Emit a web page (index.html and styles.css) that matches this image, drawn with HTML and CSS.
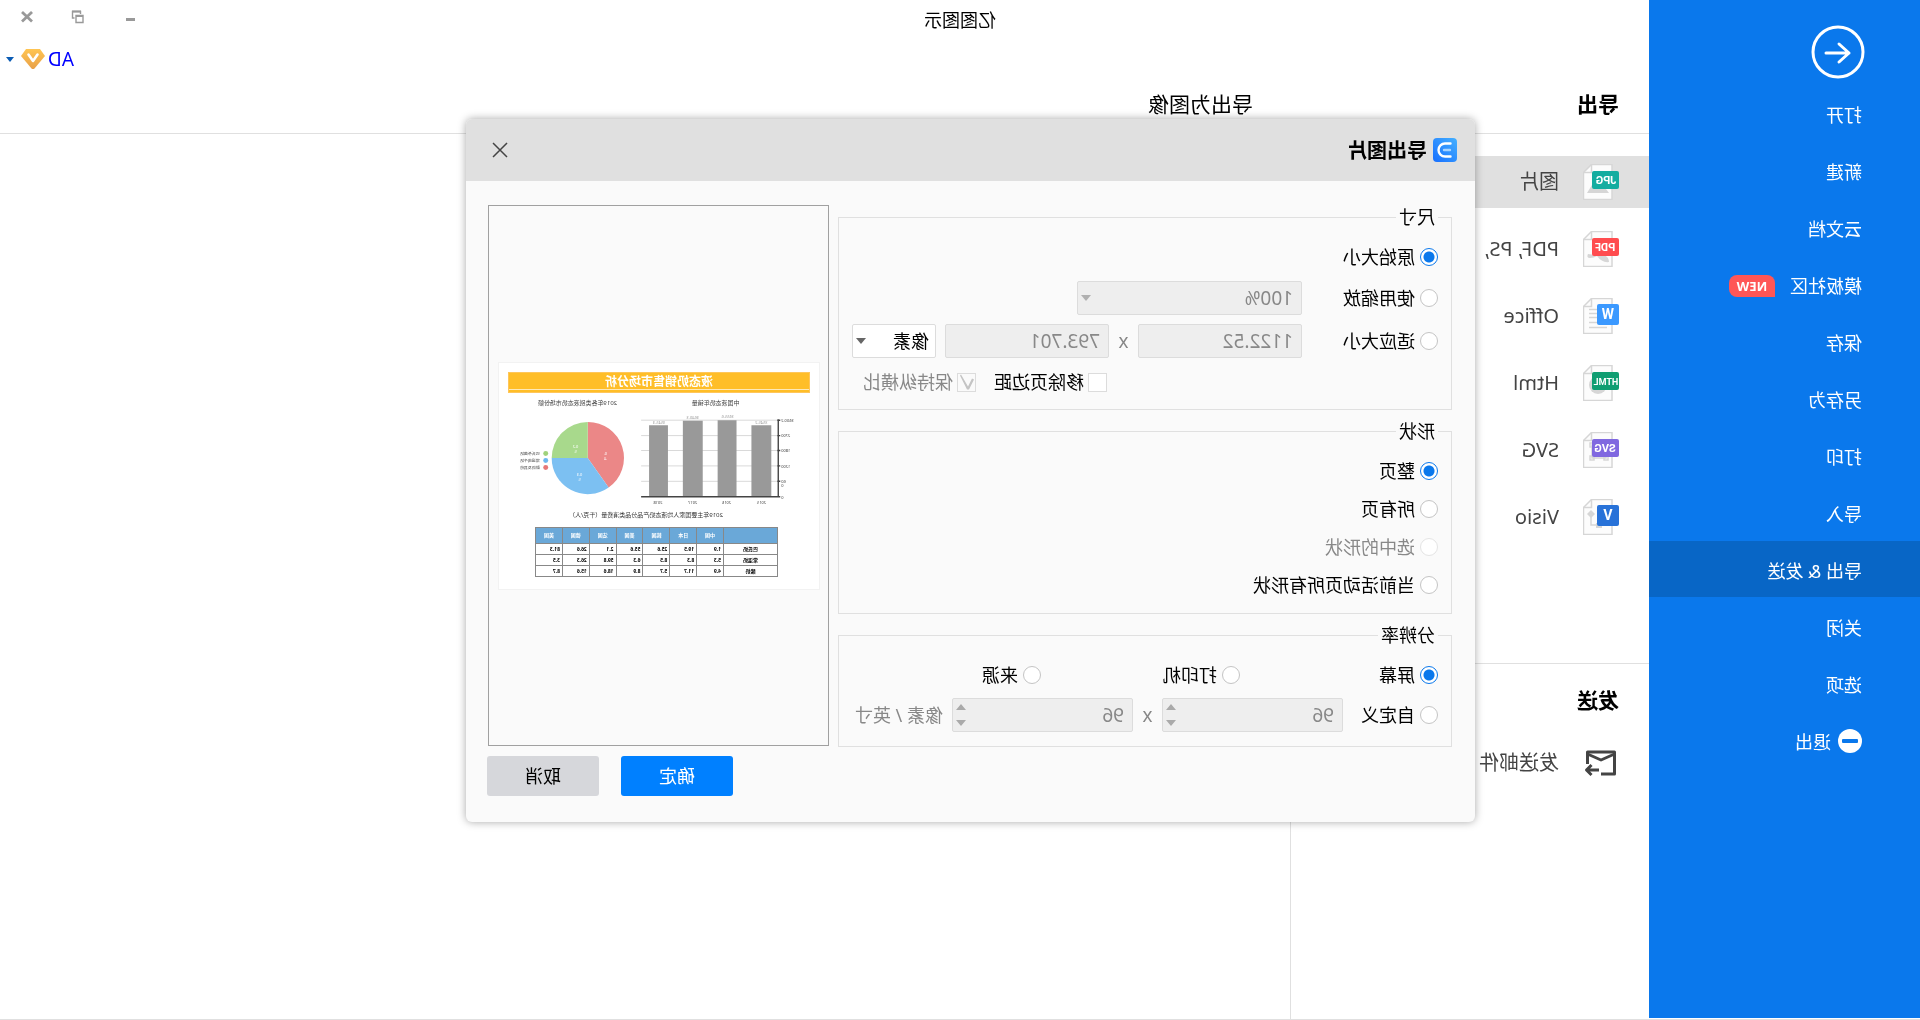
FILE: index.html
```html
<!DOCTYPE html>
<html lang="zh-CN">
<head>
<meta charset="utf-8">
<title>亿图图示</title>
<link rel="stylesheet" href="styles.css">
</head>
<body>
<div class="app">
  <nav class="sidebar">
    <button class="back" type="button" aria-label="返回">
      <svg width="54" height="54" viewBox="0 0 54 54" fill="none" stroke="#fff" stroke-width="3" stroke-linecap="round" stroke-linejoin="round"><circle cx="27" cy="27" r="25"/><path d="M39 28H16M26 19l-10 9 10 9"/></svg>
    </button>
    <a class="nav-item" href="#">打开</a>
    <a class="nav-item" href="#">新建</a>
    <a class="nav-item" href="#">云文档</a>
    <a class="nav-item" href="#">模板社区<span class="badge">NEW</span></a>
    <a class="nav-item" href="#">保存</a>
    <a class="nav-item" href="#">另存为</a>
    <a class="nav-item" href="#">打印</a>
    <a class="nav-item" href="#">导入</a>
    <a class="nav-item nav-item-active" href="#">导出 &amp; 发送</a>
    <a class="nav-item" href="#">关闭</a>
    <a class="nav-item" href="#">选项</a>
    <a class="nav-item nav-item-exit" href="#"><svg width="24" height="24" viewBox="0 0 24 24"><circle cx="12" cy="12" r="12" fill="#fff"/><rect x="4" y="10" width="16" height="4" rx="1" fill="#0a78ec"/></svg>退出</a>
  </nav>

  <main class="workspace">
    <header class="titlebar">
      <div class="app-title">亿图图示</div>
      <div class="window-controls">
        <button type="button" aria-label="最小化"><svg width="14" height="14" viewBox="0 0 14 14"><path d="M1 9.500h9" stroke="#999" stroke-width="3"/></svg></button>
        <button type="button" aria-label="还原"><svg width="14" height="14" viewBox="0 0 14 14" fill="none" stroke="#999"><path d="M2 5.500h7v7H2z" stroke-width="1.400"/><path d="M2 6h7" stroke-width="2"/><path d="M4.500 4V1.500h8v6.500h-2" stroke-width="1.400"/><path d="M4 1.500h9" stroke-width="2"/></svg></button>
        <button type="button" aria-label="关闭窗口"><svg width="14" height="14" viewBox="0 0 14 14"><path d="M2 2l10 9.500M12 2L2 11.500" stroke="#999" stroke-width="2.800"/></svg></button>
      </div>
    </header>
    <div class="account">
      <a href="#">AD</a>
      <svg width="24" height="22" viewBox="0 0 24 22"><defs><linearGradient id="gem" x1="0" y1="0" x2="0" y2="1"><stop offset="0" stop-color="#ffc552"/><stop offset="1" stop-color="#e8a048"/></linearGradient></defs><path d="M5 1h14l5 7-10.500 12.500q-1.500 1-3 0L0 8z" fill="url(#gem)"/><path d="M7.500 6.500L12 13l4.500-6.500" fill="none" stroke="#fff" stroke-width="2.600" stroke-linecap="round" stroke-linejoin="round"/></svg>
      <svg width="8" height="5" viewBox="0 0 8 5"><path d="M0 0h8L4 5z" fill="#0b5cb4"/></svg>
    </div>
    <div class="headings">
      <h2 class="heading-strong">导出</h2>
      <h2 class="heading-plain">导出为图像</h2>
    </div>
    <div class="panes">
      <div class="list-pane">
        <section class="export-list">
          <a class="row row-active" href="#">
            <svg class="doc" viewBox="0 0 36 36"><path class="sheet-line" d="M7 .5h20.500l8 8v27H7z"/><path class="sheet-line" d="M27.500.5v8h8"/><path d="M10 29l6-8 4 4 4-9 8 13z" fill="#d6d6d6"/><rect y="7" width="27" height="18" rx="2" fill="#14ada0"/><text x="13" y="20">JPG</text></svg>图片</a>
          <a class="row" href="#">
            <svg class="doc" viewBox="0 0 36 36"><path class="sheet-line" d="M7 .5h20.500l8 8v27H7z"/><path class="sheet-line" d="M27.500.5v8h8"/><path d="M10 31q0-5 5-7h9l7-1q2 4-2 4t-7-2q-5 7-12 6z" fill="#d6d6d6"/><rect y="7" width="27" height="18" rx="2" fill="#ff4c4f"/><text x="14" y="20">PDF</text></svg>PDF, PS,</a>
          <a class="row" href="#">
            <svg class="doc" viewBox="0 0 36 36"><path class="sheet-line" d="M7 .5h20.500l8 8v27H7z"/><path class="sheet-line" d="M27.500.5v8h8M20 11.500h10M20 15.500h10M20 19.500h10M20 24.500h10M12 29.500h18"/><rect y="6" width="22" height="21" rx="2" fill="#3b99ff"/><text class="big" x="11" y="21">W</text></svg>Office</a>
          <a class="row" href="#">
            <svg class="doc" viewBox="0 0 36 36"><path class="sheet-line" d="M7 .5h20.500l8 8v27H7z"/><path class="sheet-line" d="M27.500.5v8h8"/><circle cx="21" cy="20" r="9" fill="#d6d6d6"/><rect y="7" width="27" height="18" rx="2" fill="#109e72"/><text class="small" x="13" y="20">HTML</text></svg>Html</a>
          <a class="row" href="#">
            <svg class="doc" viewBox="0 0 36 36"><path class="sheet-line" d="M7 .5h20.500l8 8v27H7z"/><path class="sheet-line" d="M27.500.5v8h8"/><path d="M13 13h14v13H13zM11 24h4v4h-4zM25 24h4v4h-4zM25 11h4v4h-4z" fill="#fff" stroke="#d6d6d6" stroke-width="1.500"/><rect y="7" width="27" height="18" rx="2" fill="#8068e0"/><text x="14" y="20">SVG</text></svg>SVG</a>
          <a class="row" href="#">
            <svg class="doc" viewBox="0 0 36 36"><path class="sheet-line" d="M7 .5h20.500l8 8v27H7z"/><path class="sheet-line" d="M27.500.5v8h8M28 15v11h-9"/><path d="M28 11l4 4-4 4-4-4zM17 24h6v5h-6z" fill="#d6d6d6"/><rect y="6" width="22" height="21" rx="2" fill="#2872d8"/><text class="big" x="11" y="21">V</text></svg>Visio</a>
        </section>
        <section class="send-list">
          <h2 class="heading-strong">发送</h2>
          <a class="row" href="#">
            <svg class="doc" viewBox="0 0 36 36" fill="none" stroke="#444" stroke-width="3" stroke-linejoin="round"><path d="M18 29H4.500V7h27v12"/><path d="M4.500 9L18 15l13.500-6"/><path d="M20 25h11M27.500 20l5 5-5 5"/></svg>发送邮件</a>
        </section>
      </div>
      <div class="detail-pane"></div>
    </div>
  </main>

  <form class="dialog" role="dialog" aria-labelledby="dlg-title">
    <header class="dialog-head">
      <svg width="24" height="24" viewBox="0 0 24 24" fill="none" stroke-linecap="round"><defs><linearGradient id="logo" x1="0" y1="0" x2="1" y2="1"><stop offset="0" stop-color="#45b0ff"/><stop offset="1" stop-color="#176fff"/></linearGradient></defs><rect width="24" height="24" rx="4" fill="url(#logo)"/><path d="M6.500 5.500H12a6.500 6.500 0 0 1 0 13H6.500" stroke="#fff" stroke-width="2.400"/><path d="M7 12h6" stroke="#a8d4ff" stroke-width="2.400"/></svg>
      <h1 id="dlg-title">导出图片</h1>
      <button type="button" class="close" aria-label="关闭"><svg width="16" height="16" viewBox="0 0 16 16"><path d="M1 1l14 14M15 1L1 15" stroke="#444" stroke-width="1.500"/></svg></button>
    </header>
    <div class="dialog-body">
      <div class="options">
        <fieldset>
          <legend>尺寸</legend>
          <div class="size-grid">
            <label class="choice full"><input type="radio" name="size" checked>原始大小</label>
            <label class="choice"><input type="radio" name="size">使用缩放</label>
            <span class="select zoom"><select disabled aria-label="缩放"><option>100%</option></select></span>
            <label class="choice"><input type="radio" name="size">适应大小</label>
            <div class="pair">
              <input class="field" type="text" value="1122.52" disabled aria-label="宽度">
              <span class="times">x</span>
              <input class="field" type="text" value="793.701" disabled aria-label="高度">
              <span class="select unit"><select aria-label="单位"><option>像素</option></select></span>
            </div>
            <div class="checks">
              <label class="choice"><input type="checkbox">移除页边距</label>
              <label class="choice off"><input type="checkbox" checked disabled>保持纵横比</label>
            </div>
          </div>
        </fieldset>
        <fieldset>
          <legend>形状</legend>
          <div class="shape-list">
            <label class="choice"><input type="radio" name="shape" checked>整页</label>
            <label class="choice"><input type="radio" name="shape">所有页</label>
            <label class="choice off"><input type="radio" name="shape" disabled>选中的形状</label>
            <label class="choice"><input type="radio" name="shape">当前活动页所有形状</label>
          </div>
        </fieldset>
        <fieldset>
          <legend>分辨率</legend>
          <div class="res-list">
            <div class="res-presets">
              <label class="choice"><input type="radio" name="dpi" checked>屏幕</label>
              <label class="choice"><input type="radio" name="dpi">打印机</label>
              <label class="choice"><input type="radio" name="dpi">来源</label>
            </div>
            <div class="res-custom">
              <label class="choice"><input type="radio" name="dpi">自定义</label>
              <span class="spin"><input type="number" value="96" disabled aria-label="水平分辨率"></span>
              <span class="times">x</span>
              <span class="spin"><input type="number" value="96" disabled aria-label="垂直分辨率"></span>
              <span class="unit-note">像素 / 英寸</span>
            </div>
          </div>
        </fieldset>
      </div>

      <div class="preview">
        <div class="sheet">
          <div class="banner">液态奶销售市场分析</div>
          <svg class="charts" viewBox="0 34 322 112">
            <g class="cap"><text x="104" y="43">中国液态奶年销量</text><text x="243" y="43">2019年各类别液态奶市场份额</text></g>
            <path d="M41 58h138M41 73.500h138M41 88.500h138M41 104h138M41 119.500h138" stroke="#d9d9d9"/>
            <path d="M48 63h20v72H48zM83 58h19v77H83zM117 58.500h20V135h-20zM152 63h19v72h-19z" fill="#999"/>
            <path d="M41 57v78.500M39 58h3M39 73.500h3M39 88.500h3M39 104h3M39 119.500h3M39 135h140" stroke="#444" stroke-width="1.400" fill="none"/>
            <g class="val"><text x="58" y="62">3545.2</text><text x="92" y="56">3655.6</text><text x="127" y="57">3640.3</text><text x="161" y="62">3545.3</text></g>
            <g class="axis"><text x="58" y="142">2015</text><text x="93" y="142">2016</text><text x="127" y="142">2017</text><text x="162" y="142">2018</text></g>
            <g class="tick"><text x="38" y="60">3600.2</text><text x="38" y="75">2700</text><text x="38" y="90">1800</text><text x="38" y="106">1200</text><text x="38" y="121">60</text><text x="38" y="125">0</text><text x="38" y="137">0</text></g>
            <path d="M232.700 96V59.700a36.300 36.300 0 0 0-21 66z" fill="#eb8787"/>
            <path d="M232.700 96l-21 29.700A36.300 36.300 0 0 0 269 96z" fill="#7cc0f2"/>
            <path d="M232.700 96V59.700A36.300 36.300 0 0 1 269 96z" fill="#a8d98c"/>
            <g class="slice"><text x="215" y="93">0.</text><text x="215" y="98">4</text><text x="245" y="86">0.2</text><text x="245" y="91">5</text><text x="241" y="114">0.3</text><text x="241" y="119">5</text></g>
            <circle cx="275" cy="91.500" r="2.500" fill="#a0d27c"/><circle cx="275" cy="98.500" r="2.500" fill="#6db8f0"/><circle cx="275" cy="105.500" r="2.500" fill="#e67878"/>
            <g class="key"><text x="281" y="93">巴氏杀菌奶</text><text x="281" y="100">常温纯牛奶</text><text x="281" y="107">酸奶及其他</text></g>
          </svg>
          <div class="caption">2019年主要国家人均液态奶产品分品类消费量（千克/人）</div>
          <table>
            <thead><tr><th></th><th>中国</th><th>日本</th><th>韩国</th><th>美国</th><th>法国</th><th>德国</th><th>英国</th></tr></thead>
            <tbody>
              <tr><th>巴氏奶</th><td>1.9</td><td>19.5</td><td>25.6</td><td>55.6</td><td>2.1</td><td>26.6</td><td>81.3</td></tr>
              <tr><th>常温奶</th><td>5.3</td><td>8.3</td><td>8.5</td><td>6.3</td><td>59.8</td><td>26.3</td><td>3.5</td></tr>
              <tr><th>酸奶</th><td>4.9</td><td>11.7</td><td>5.7</td><td>8.9</td><td>18.6</td><td>15.6</td><td>8.7</td></tr>
            </tbody>
          </table>
        </div>
      </div>
    </div>
    <footer class="dialog-foot">
      <button type="submit" class="btn btn-primary">确定</button>
      <button type="button" class="btn">取消</button>
    </footer>
  </form>
</div>
</body>
</html>
```
FILE: styles.css
```css
* { box-sizing: border-box; }

body {
  margin: 0;
  background: #fff;
  color: #000;
  font-family: "Noto Sans", "Noto Sans CJK SC", sans-serif;
  font-size: 18px;
  line-height: 24px;
}

button, input, select { font: inherit; color: inherit; }
button { border: 0; padding: 0; background: none; display: flex; align-items: center; justify-content: center; }
a { color: inherit; text-decoration: none; }
h1, h2 { margin: 0; font-weight: 700; }
svg { display: block; flex: none; }

/* The whole window is shown flipped left to right */
.app {
  position: relative;
  display: flex;
  min-height: 100vh;
  border-bottom: 1px solid #e0e0e0;
  transform: scaleX(-1);
}

/* Sidebar */
.sidebar {
  flex: 0 0 271px;
  display: flex;
  flex-direction: column;
  gap: 1px;
  background: #0a78ec;
  color: #fff;
  padding-top: 25px;
  border-bottom: 1px solid #fff;
}
.back { width: 54px; height: 54px; margin: 0 0 5px 55px; }
.nav-item {
  display: flex;
  align-items: center;
  height: 56px;
  padding: 3px 0 0 58px;
}
.nav-item-active { background: #0866c6; }
.nav-item-exit { gap: 7px; }
.nav-item-exit svg { margin-bottom: 1px; }
.badge {
  width: 46px;
  height: 22px;
  margin-left: 15px;
  border-radius: 8px 8px 8px 0;
  background: #ff5656;
  font-size: 13px;
  font-weight: 700;
  line-height: 22px;
  text-align: center;
}

/* Workspace */
.workspace { flex: 1; min-width: 0; display: flex; flex-direction: column; }
.titlebar { display: grid; grid-template-columns: 1fr 271px; height: 40px; }
.app-title { text-align: center; line-height: 40px; }
.window-controls {
  display: flex;
  justify-content: flex-end;
  gap: 37px;
  padding: 10px 20px 0 0;
}
.window-controls button { height: 14px; }
.account {
  display: flex;
  align-items: center;
  justify-content: flex-end;
  gap: 3px;
  height: 38px;
  padding-right: 6px;
  font-size: 19px;
  color: #00f;
}
.account svg:last-child { margin-left: 4px; }
.headings {
  display: grid;
  grid-template-columns: 358px 1fr;
  height: 56px;
  border-bottom: 1px solid #e0e0e0;
  line-height: 52px;
}
.headings h2, .send-list h2 { font-size: 21px; }
.heading-strong { padding-left: 30px; }
.heading-plain { padding-left: 38px; font-weight: 400; }
.panes { flex: 1; display: grid; grid-template-columns: 358px 1fr; }
.detail-pane { border-left: 1px solid #e0e0e0; }
.export-list {
  display: flex;
  flex-direction: column;
  gap: 15px;
  padding: 22px 0 120px;
}
.send-list { border-top: 1px solid #e0e0e0; padding-top: 21px; }
.send-list h2 { line-height: 30px; margin-bottom: 22px; }
.row {
  display: flex;
  align-items: center;
  gap: 24px;
  height: 52px;
  padding-left: 30px;
  font-size: 20px;
  line-height: 26px;
  color: #444;
  white-space: nowrap;
}
.row-active { background: #e0e0e0; }
.doc { width: 36px; height: 36px; }
.doc text {
  fill: #fff;
  font-family: Roboto, sans-serif;
  font-size: 11px;
  font-weight: 700;
  text-anchor: middle;
}
.doc .big { font-size: 14px; }
.doc .small { font-size: 9px; }
.sheet-line { fill: none; stroke: #d6d6d6; stroke-width: 1.5px; }
.row .sheet-line:first-child { fill: #fcfcfc; }

/* Export dialog */
.dialog {
  position: absolute;
  left: 445px;
  top: 119px;
  width: 1009px;
  background: #fafafa;
  border-radius: 6px;
  box-shadow: 0 0 8px rgba(0, 0, 0, .35);
}
.dialog-head {
  display: flex;
  align-items: center;
  gap: 6px;
  height: 62px;
  padding: 0 26px 0 18px;
  background: #e0e0e0;
  border-radius: 6px 6px 0 0;
}
.dialog-head h1 { font-size: 20px; padding-top: 2px; }
.close { margin-left: auto; }
.dialog-body { display: flex; gap: 9px; padding: 24px 22px 0 23px; }
.options { flex: 1; display: flex; flex-direction: column; gap: 9px; }

fieldset {
  min-width: 0;
  margin: 0;
  padding: 16px 13px 14px;
  border: 1px solid #e0e0e0;
}
legend { padding: 0 3px; line-height: 24px; }
.choice { display: flex; align-items: center; gap: 5px; height: 24px; white-space: nowrap; }
.off, .unit-note { color: #888; }

input[type="radio"], input[type="checkbox"] {
  appearance: none;
  flex: none;
  width: 18px;
  height: 18px;
  margin: 0;
  border: 1px solid #c4c4c4;
  background: #fff;
}
input[type="radio"] { border-radius: 50%; }
input[type="radio"]:checked {
  border-color: #0a78ec;
  background: radial-gradient(circle, #0a78ec 5px, #fff 6px);
}
input[type="radio"]:disabled { border-color: #e4e4e4; }
input[type="checkbox"] { width: 19px; height: 19px; border-color: #dcdcdc; }
input[type="checkbox"]:checked { display: grid; background: #fafafa; }
input[type="checkbox"]:checked::before {
  content: "";
  background: #c4c4c4;
  clip-path: polygon(1px 6px, 3px 5px, 7px 13px, 14px 1px, 15px 2px, 8px 16px, 6px 16px);
}

.size-grid {
  display: grid;
  grid-template-columns: 136px 1fr;
  align-items: center;
  row-gap: 9px;
}
.full { grid-column: 1 / 3; margin-bottom: 3px; }
.pair { display: flex; align-items: center; }
.field, .select select, .spin input {
  width: 100%;
  height: 34px;
  margin: 0;
  padding: 0 8px;
  border: 1px solid #dcdcdc;
  border-radius: 2px;
  background: #fff;
  appearance: none;
}
.field:disabled, .select select:disabled, .spin input:disabled {
  background: #eee;
  color: #888;
  font-size: 19px;
  opacity: 1;
}
.pair .field { width: 164px; }
.times { width: 29px; text-align: center; font-size: 19px; color: #888; }
.select { display: grid; align-items: center; }
.select::after {
  content: "";
  grid-area: 1 / 1;
  justify-self: end;
  width: 10px;
  height: 6px;
  margin-right: 4px;
  background: #666;
  clip-path: polygon(0 0, 100% 0, 50% 100%);
  pointer-events: none;
}
.select select { grid-area: 1 / 1; }
.zoom { width: 225px; }
.zoom::after { background: #b0b0b0; }
.unit { width: 84px; margin-left: 9px; }
.unit select { padding: 0 6px; }
.checks { grid-column: 2; display: flex; gap: 18px; margin: 3px 0 1px 195px; }
.checks .choice { gap: 4px; }

.shape-list { display: flex; flex-direction: column; gap: 14px; padding-bottom: 2px; }

.res-list { display: flex; flex-direction: column; gap: 11px; }
.res-presets { display: grid; grid-template-columns: 198px 199px 1fr; }
.res-custom { display: flex; align-items: center; }
.res-custom .choice { width: 95px; }
.spin { display: grid; align-items: center; width: 181px; }
.spin input { grid-area: 1 / 1; appearance: textfield; }
.spin input::-webkit-inner-spin-button { appearance: none; }
.spin::after {
  content: "";
  grid-area: 1 / 1;
  justify-self: end;
  width: 10px;
  height: 22px;
  margin-right: 4px;
  background: #aaa;
  clip-path: polygon(0 6px, 50% 0, 100% 6px, 0 6px, 0 16px, 100% 16px, 50% 22px, 0 16px);
}
.unit-note { margin-left: 9px; white-space: nowrap; }

.dialog-foot { display: flex; justify-content: flex-end; gap: 22px; padding: 9px 21px 26px; }
.btn { width: 112px; height: 40px; border-radius: 3px; background: #d6d7db; }
.btn-primary { background: #0080ff; color: #fff; }

/* Preview thumbnail */
.preview {
  flex: 0 0 341px;
  height: 541px;
  display: flex;
  align-items: center;
  padding-left: 8px;
  border: 1px solid #a0a0a0;
}
.sheet {
  width: 322px;
  height: 228px;
  padding-top: 9px;
  background: #fff;
  border: 1px solid #f2f2f2;
  font-size: 6px;
  line-height: 8px;
  color: #333;
}
.banner {
  height: 21px;
  margin: 0 9px;
  border: 1px solid #ffc65a;
  background: linear-gradient(#ffbe28 16px, #ffe9b8 16px, #ffe9b8 17px, #ffbe28 17px);
  color: #fff;
  font-size: 12px;
  font-weight: 700;
  line-height: 18px;
  text-align: center;
}
.charts { width: 320px; height: 112px; margin-top: 3px; }
.charts text { fill: #444; font-size: 4px; text-anchor: middle; }
.charts .cap text { font-size: 6px; }
.charts .val text { fill: #999; }
.charts .key text { text-anchor: start; }
.charts .tick text { text-anchor: end; }
.charts .slice text { fill: #fff; }
.caption { height: 8px; margin: 3px 0 8px 45px; width: 256px; text-align: center; white-space: nowrap; }
.sheet table {
  width: 243px;
  margin-left: 41px;
  border-collapse: collapse;
  table-layout: fixed;
  line-height: 6px;
  font-size: 5px;
  font-weight: 700;
  color: #000;
}
.sheet th, .sheet td { height: 11px; padding: 0; border: 1px solid #888; }
.sheet td { padding-left: 2px; }
.sheet th:first-child { width: 54px; }
.sheet thead th { height: 16px; background: #6aa8d8; color: #fff; }
```
